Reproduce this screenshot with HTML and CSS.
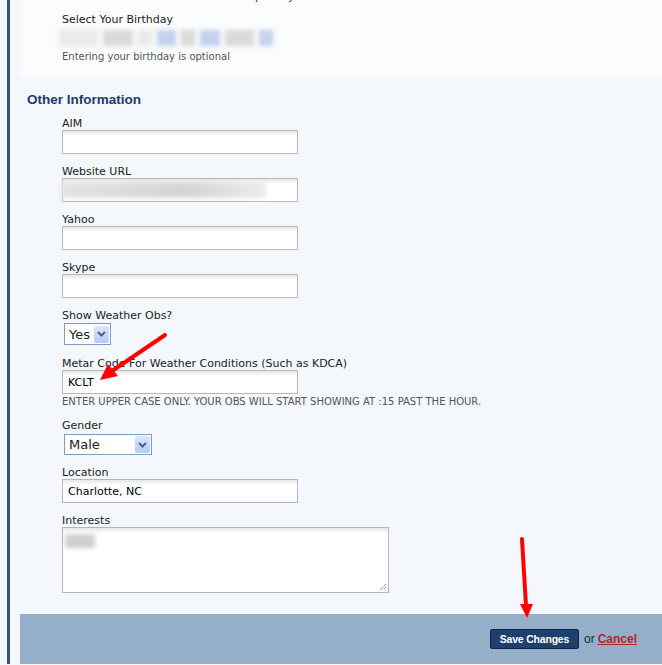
FILE: index.html
```html
<!DOCTYPE html>
<html lang="en">
<head>
  <meta charset="UTF-8">
  <title>Edit Profile</title>
  <link rel="stylesheet" href="styles.css">
</head>
<body>
  <div class="page">
    <div class="panel">

      <!-- oberer Teil (Geburtstag) -->
      <div class="block-top">
        <p class="cut-text">Your member title is shown beside posts you make</p>
        <div class="field">
          <label>Select Your Birthday</label>
          <div class="blurred birthday">
            <span class="blob light w40"></span>
            <span class="blob w30"></span>
            <span class="blob light w14"></span>
            <span class="blob blue w20"></span>
            <span class="blob w14"></span>
            <span class="blob blue w20"></span>
            <span class="blob w30"></span>
            <span class="blob blue w14"></span>
          </div>
          <p class="hint">Entering your birthday is optional</p>
        </div>
      </div>

      <h2 class="section-title">Other Information</h2>
      <div class="fields">
        <div class="field">
          <label>AIM</label>
          <input type="text" class="text">
        </div>
        <div class="field">
          <label>Website URL</label>
          <div class="text fake">
            <span class="blurred url"></span>
          </div>
        </div>
        <div class="field">
          <label>Yahoo</label>
          <input type="text" class="text">
        </div>
        <div class="field">
          <label>Skype</label>
          <input type="text" class="text">
        </div>
        <div class="field">
          <label>Show Weather Obs?</label>
          <div class="select small">
            <span class="select-value">Yes</span>
            <span class="select-btn"><svg width="9" height="6" viewBox="0 0 9 6"><path d="M1 1 L4.5 4.5 L8 1" fill="none" stroke="#4d6185" stroke-width="2"/></svg></span>
          </div>
        </div>
        <div class="field">
          <label>Metar Code For Weather Conditions (Such as KDCA)</label>
          <input type="text" class="text" value="KCLT">
          <p class="hint upper">Enter upper case only. Your obs will start showing at :15 past the hour.</p>
        </div>
        <div class="field">
          <label>Gender</label>
          <div class="select wide">
            <span class="select-value">Male</span>
            <span class="select-btn"><svg width="9" height="6" viewBox="0 0 9 6"><path d="M1 1 L4.5 4.5 L8 1" fill="none" stroke="#4d6185" stroke-width="2"/></svg></span>
          </div>
        </div>
        <div class="field">
          <label>Location</label>
          <input type="text" class="text" value="Charlotte, NC">
        </div>
        <div class="field">
          <label>Interests</label>
          <div class="area">
            <span class="blurred interest"></span>
            <svg class="grip" width="9" height="9" viewBox="0 0 9 9"><path d="M8 2 L2 8 M8 5 L5 8" stroke="#555" stroke-width="1" stroke-dasharray="1 1"/></svg>
          </div>
        </div>
      </div>

      <div class="footer">
        <button class="btn-save">Save Changes</button>
        <span class="or">or</span>
        <a href="#" class="cancel">Cancel</a>
      </div>
    </div>
  </div>

  <!-- rote Markierungspfeile -->
  <svg class="marks" width="662" height="665" viewBox="0 0 662 665">
    <line x1="165" y1="335" x2="112" y2="371" stroke="#f00" stroke-width="4" stroke-linecap="round"/>
    <polygon points="100,380 108,364 118,376" fill="#f00"/>
    <line x1="522" y1="539" x2="526" y2="606" stroke="#f00" stroke-width="4" stroke-linecap="round"/>
    <polygon points="527,618 520,604 533,604" fill="#f00"/>
  </svg>
</body>
</html>
```

FILE: styles.css
```css
/* Grundlayout */
* { box-sizing: border-box; }
body {
  margin: 0;
  background: #f4f7fb;
  font-family: Tahoma, "DejaVu Sans", sans-serif;
  font-size: 11px;
  color: #222;
}
.page {
  padding-left: 7px;
  height: 665px;
  overflow: hidden;
}
.panel {
  border-left: 3px solid #34537f;
  padding-left: 10px;
  height: 664px;
  display: flex;
  flex-direction: column;
}

/* oberer Block */
.block-top {
  background: #fbfcfe;
  height: 78px;
  flex-shrink: 0;
  padding-left: 42px;
}
.cut-text {
  margin: -10px 0 0;
  height: 13px;
  line-height: 13px;
  color: #333;
}
.block-top .field { margin-top: 10px; }

/* Felder */
.fields { padding-left: 42px; }
.field { margin-bottom: 11px; }
.field label {
  display: block;
  height: 13px;
  line-height: 13px;
  color: #222;
}
.hint {
  margin: 2px 0 0;
  line-height: 12px;
  color: #555;
  font-size: 10px;
}
.hint.upper { text-transform: uppercase; }
.section-title {
  margin: 14px 0 9px 7px;
  line-height: 16px;
  font-family: "Liberation Sans", Arial, sans-serif;
  font-size: 13.5px;
  font-weight: bold;
  color: #1c3c6b;
}

.text, .area {
  display: block;
  width: 236px;
  height: 24px;
  border: 1px solid #b8b8b8;
  background: linear-gradient(#e6e6e6, #fff 5px);
  padding: 0 5px;
  font-family: inherit;
  font-size: 11px;
  color: #000;
}
.fake { position: relative; }
.area {
  position: relative;
  width: 327px;
  height: 66px;
}
.grip { position: absolute; right: 1px; bottom: 1px; }

/* Auswahlfelder im XP-Stil */
.select {
  display: flex;
  align-items: center;
  justify-content: space-between;
  margin: 1px 0 0 2px;
  border: 1px solid #7f9db9;
  background: #fff;
  padding: 1px 1px 1px 4px;
  font-size: 13px;
}
.select.small { width: 47px; height: 22px; margin-bottom: 12px; }
.select.wide { width: 88px; height: 21px; margin-top: 2px; }
.select-btn {
  display: flex;
  align-items: center;
  justify-content: center;
  width: 15px;
  height: 17px;
  background: linear-gradient(#dce6fd, #b6c9f6);
  border-radius: 2px;
}

/* unscharfe Platzhalter */
.blurred { display: block; filter: blur(2px); }
.birthday {
  display: flex;
  gap: 5px;
  align-items: center;
  height: 22px;
  width: 222px;
  margin: 1px 0 0 -7px;
  padding: 0 4px;
  background: #f9f9fb;
}
.blob { height: 16px; background: #dadada; }
.blob.light { background: #eaeaea; }
.blob.blue { background: #c3d2ee; }
.w40 { width: 40px; }
.w30 { width: 30px; }
.w20 { width: 20px; }
.w14 { width: 14px; }
.url {
  position: absolute;
  left: -2px; top: 3px;
  width: 205px; height: 16px;
  background: linear-gradient(90deg, #e4e4e4, #d4d4d4 60%, #ececec);
}
.interest {
  position: absolute;
  left: 2px; top: 6px;
  width: 30px; height: 14px;
  background: #cfcfcf;
}

/* Fusszeile */
.footer {
  margin-top: auto;
  height: 50px;
  flex-shrink: 0;
  background: #95afca;
  display: flex;
  justify-content: flex-end;
  align-items: center;
  padding-right: 25px;
  font-family: "Liberation Sans", Arial, sans-serif;
}
.btn-save {
  height: 20px;
  width: 89px;
  padding: 0;
  margin-right: 5px;
  background: #1f3f6f;
  border: 1px solid #0f2547;
  border-radius: 2px;
  color: #fff;
  font-family: inherit;
  font-size: 10.5px;
  font-weight: bold;
  letter-spacing: -0.2px;
}
.or { font-size: 12px; color: #1a2a40; margin-right: 3px; }
.cancel {
  color: #b3262b;
  font-weight: bold;
  font-size: 12px;
}

.marks { position: absolute; left: 0; top: 0; pointer-events: none; }
```
